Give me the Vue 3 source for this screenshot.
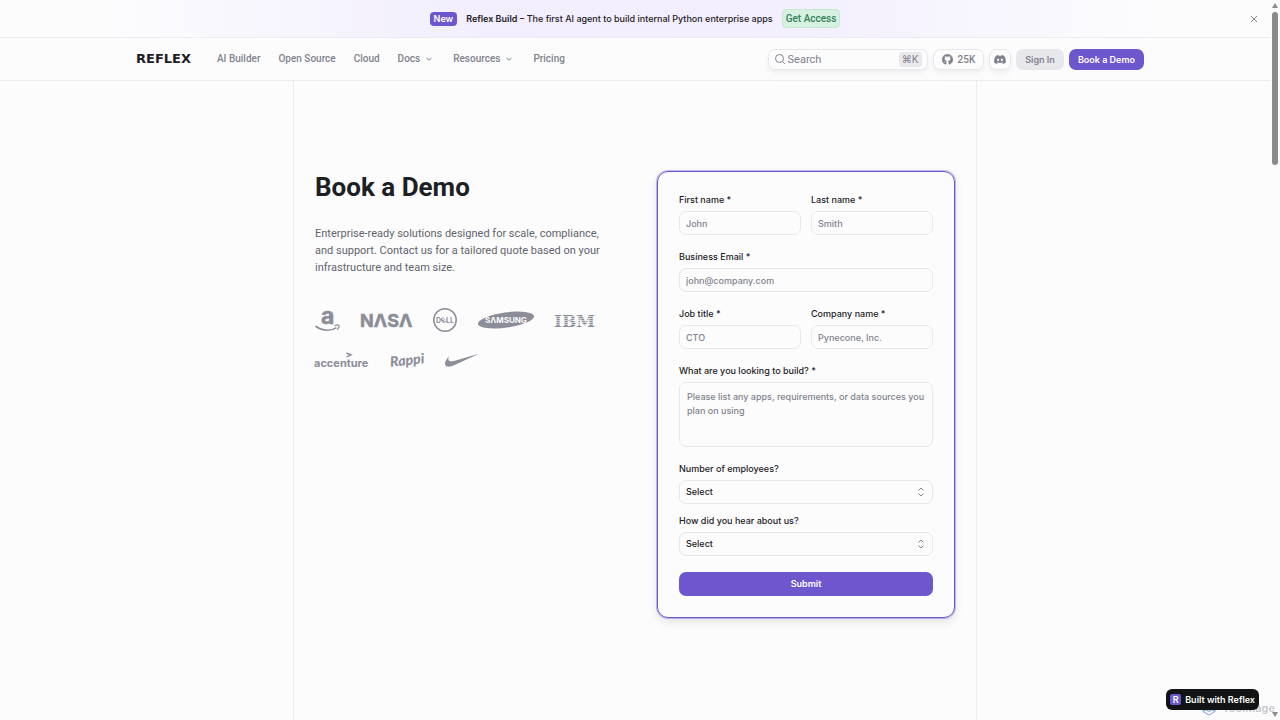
<script setup>
import { ref } from 'vue'

const showBanner = ref(true)
const navLinks = [
  { label: 'AI Builder' },
  { label: 'Open Source' },
  { label: 'Cloud' },
  { label: 'Docs', menu: true },
  { label: 'Resources', menu: true },
  { label: 'Pricing' },
]
const fields = [
  { id: 'first-name', label: 'First name *', hint: 'John' },
  { id: 'last-name', label: 'Last name *', hint: 'Smith' },
  { id: 'email', label: 'Business Email *', hint: 'john@company.com', type: 'email', wide: true },
  { id: 'job-title', label: 'Job title *', hint: 'CTO' },
  { id: 'company', label: 'Company name *', hint: 'Pynecone, Inc.' },
]
const selects = [
  { id: 'employees', label: 'Number of employees?' },
  { id: 'referral', label: 'How did you hear about us?' },
]
</script>

<template>
  <div class="page">
    <div v-if="showBanner" class="banner">
      <span class="tag">New</span>
      <p class="news"><strong>Reflex Build</strong> – The first AI agent to build internal Python enterprise apps</p>
      <a class="access" href="#">Get Access</a>
      <button class="close" type="button" aria-label="Close" @click="showBanner = false">
        <svg viewBox="0 0 8 8" width="8" height="8"><path d="M1 1l6 6M7 1l-6 6" /></svg>
      </button>
    </div>

    <header class="header">
      <div class="bar">
        <a class="brand" href="#">REFLEX</a>
        <nav class="nav">
          <a v-for="link in navLinks" :key="link.label" href="#">
            {{ link.label }}
            <svg v-if="link.menu" viewBox="0 0 8 8" width="8" height="8"><path d="M1.5 3l2.5 2.2L6.5 3" /></svg>
          </a>
        </nav>
        <div class="actions">
          <label class="search">
            <svg viewBox="0 0 12 12" width="12" height="12"><circle cx="5.5" cy="5.5" r="4" /><path d="M8.5 8.5l2.3 2.3" /></svg>
            <input type="search" placeholder="Search" aria-label="Search" />
            <kbd>⌘K</kbd>
          </label>
          <a class="pill stars" href="#">
            <svg viewBox="0 0 16 16" width="11" height="11"><path stroke="#80838d" d="M8 .6a7.4 7.4 0 0 0-3 14.2c.5.2.9 0 .9-.5v-2c-2.2.4-2.7-.7-3-1.4-.2-.5-.6-.8-1-1.1.8-.3 1.4.2 1.8.8.6.9 1.4 1 2.2.6.1-.5.3-.9.6-1.1-1.9-.2-3.2-1.1-3.2-3.4 0-.8.3-1.5.8-2-.2-.6-.2-1.3.1-2 .8 0 1.5.4 2.1.8a7 7 0 0 1 3.4 0c.6-.4 1.3-.8 2.1-.8.3.7.3 1.4.1 2 .5.5.8 1.2.8 2 0 2.3-1.3 3.2-3.2 3.4.4.4.6 1 .6 1.7v2.5c0 .5.4.7.9.5A7.4 7.4 0 0 0 8 .6z" /></svg>
            25K
          </a>
          <a class="pill discord" href="#" aria-label="Discord">
            <svg viewBox="0 0 16 12" width="12" height="9"><path fill-rule="evenodd" d="M13.5 1.1A13 13 0 0 0 10.3.1l-.5 1a12 12 0 0 0-3.6 0l-.5-1A13 13 0 0 0 2.5 1.1C.5 4.1-.1 7 .2 9.9c1.3 1 2.6 1.6 3.9 2l.8-1.3-1.2-.6.3-.3c2.5 1.2 5.4 1.2 8 0l.3.3-1.2.6.8 1.3c1.3-.4 2.6-1 3.9-2 .3-3.4-.6-6.2-2.3-8.8zM5.5 8.1c-.8 0-1.4-.7-1.4-1.6s.6-1.6 1.4-1.6 1.4.7 1.4 1.6-.6 1.6-1.4 1.6zm5 0c-.8 0-1.4-.7-1.4-1.6s.6-1.6 1.4-1.6 1.4.7 1.4 1.6-.6 1.6-1.4 1.6z" /></svg>
          </a>
          <a class="sign" href="#">Sign In</a>
          <a class="demo" href="#">Book a Demo</a>
        </div>
      </div>
    </header>

    <main class="frame">
      <section class="intro">
        <h1>Book a Demo</h1>
        <p>Enterprise-ready solutions designed for scale, compliance, and support. Contact us for a tailored quote based on your infrastructure and team size.</p>
        <ul class="logos">
          <li>
            <svg viewBox="0 0 25 24" width="25" height="24" role="img" aria-label="Amazon">
              <text x="6" y="16" class="bold thick" font-size="23">a</text>
              <path class="line" stroke-width="1.7" d="M.5 18.2C7 23.2 15.5 23.5 21.5 19.6" />
              <path class="line" stroke-width="1.2" d="M19.5 17.7c2-.8 3.8-.8 4.3-.3.4.6-.1 2.6-1.5 4.2" />
            </svg>
          </li>
          <li>
            <svg viewBox="0 0 51 24" width="51" height="24" role="img" aria-label="NASA">
              <text x="-1" y="19" class="bold thick" font-size="18">NΛSΛ</text>
            </svg>
          </li>
          <li>
            <svg viewBox="0 0 24 24" width="24" height="24" role="img" aria-label="Dell">
              <circle class="line" cx="12" cy="12" r="11.2" stroke-width="1.5" />
              <text x="3" y="15" class="bold" font-size="7">D</text>
              <text x="-2" y="3" transform="translate(10 12) rotate(-38)" class="bold" font-size="7">E</text>
              <text x="13" y="15" class="bold" font-size="7">LL</text>
            </svg>
          </li>
          <li>
            <svg viewBox="0 0 56 24" width="56" height="24" role="img" aria-label="Samsung">
              <ellipse cx="28" cy="12" rx="28.3" ry="7.6" transform="rotate(-8 28 12)" />
              <text x="7" y="15" class="bold light" font-size="8">SΛMSUNG</text>
            </svg>
          </li>
          <li>
            <svg viewBox="0 0 38 24" width="38" height="24" role="img" aria-label="IBM">
              <text x="-1" y="19" class="slab" font-size="17">IBM</text>
              <path class="stripes" d="M-1 8.5h41M-1 10.5h41M-1 12.5h41M-1 14.5h41M-1 16.5h41" />
            </svg>
          </li>
          <li>
            <svg viewBox="0 0 54 24" width="54" height="24" role="img" aria-label="Accenture">
              <path class="line" stroke-width="1.4" d="M31.5 5l4.5 1.800-4.500 2" />
              <text x="-1" y="19" class="bold" font-size="11">accenture</text>
            </svg>
          </li>
          <li>
            <svg viewBox="0 0 34 24" width="34" height="24" role="img" aria-label="Rappi">
              <text x="0" y="17" transform="rotate(-6 17 12)" class="script" font-size="14">Rappi</text>
            </svg>
          </li>
          <li>
            <svg viewBox="0 0 34 24" width="34" height="24" role="img" aria-label="Nike">
              <path d="M34 5.8L9.5 17.1c-2.7 1.2-5 1.7-6.7 1.5C.7 18.4-.3 16.9.1 14.7.5 12.7 2 10.6 4 8.2c-.8 1.7-1 3.3-.1 4.2 1.2 1.2 3.5.9 6 .3z" />
            </svg>
          </li>
        </ul>
      </section>

      <form class="card" @submit.prevent>
        <div v-for="f in fields" :key="f.id" class="field" :class="{ wide: f.wide }">
          <label :for="f.id">{{ f.label }}</label>
          <input :id="f.id" :type="f.type || 'text'" :placeholder="f.hint" />
        </div>
        <div class="field wide">
          <label for="build">What are you looking to build? *</label>
          <textarea id="build" placeholder="Please list any apps, requirements, or data sources you plan on using"></textarea>
        </div>
        <div class="choices wide">
          <div v-for="s in selects" :key="s.id" class="field">
            <label :for="s.id">{{ s.label }}</label>
            <div class="select">
              <select :id="s.id"><option>Select</option></select>
              <svg viewBox="0 0 8 10" width="8" height="10"><path d="M1.5 3.5L4 1l2.5 2.5M1.5 6.5L4 9l2.5-2.5" /></svg>
            </div>
          </div>
        </div>
        <button class="submit wide" type="submit">Submit</button>
      </form>
    </main>

    <div class="watermark" aria-hidden="true">
      <svg viewBox="0 0 16 16" width="16" height="16"><path d="M8 1l6 3.5v7L8 15l-6-3.5v-7zM8 4.5l3 1.8v3.4L8 11.5 5 9.7V6.3zM8 1v3.5M14 11.5l-3-1.8M2 11.5l3-1.8" /></svg>
      ToolMage
    </div>
    <a class="built" href="#"><span class="mark">R</span>Built with Reflex</a>
    <div class="scroll" aria-hidden="true">
      <svg viewBox="0 0 6 5" width="6" height="5"><path d="M3 0l3 5H0z" /></svg>
      <div class="track"><div class="thumb"></div></div>
      <svg viewBox="0 0 6 5" width="6" height="5"><path d="M0 0h6L3 5z" /></svg>
    </div>
  </div>
</template>

<style>
body {
  background: #fcfcfd;
}
</style>

<style scoped>
* {
  box-sizing: border-box;
}
.page {
  min-height: 100vh;
  display: flex;
  flex-direction: column;
  margin-right: 10px;
  color: #1c2024;
  font: 500 9px/14px Inter, sans-serif;
}
a {
  color: inherit;
  text-decoration: none;
}
button,
input,
select,
textarea {
  font: inherit;
  color: inherit;
  outline: none;
}
svg {
  display: block;
  flex: none;
  overflow: visible;
}
.banner {
  position: relative;
  display: flex;
  align-items: center;
  justify-content: center;
  gap: 9px;
  height: 38px;
  border-bottom: 1px solid #ececf1;
  background: linear-gradient(90deg, #fcfcfd 8%, #f2eefe 38%, #f3effe 62%, #fcfcfd 92%);
}
.tag {
  padding: 0 4px;
  border-radius: 4px;
  background: #6e56cf;
  color: #fff;
  font-weight: 600;
}
.news {
  margin: 0;
}
.news strong {
  font-weight: 600;
}
.access {
  padding: 1px 3px;
  border: 1px solid #c4e8d1;
  border-radius: 4px;
  background: #d6f1df;
  color: #30815a;
  font: 500 10px/15px Roboto, sans-serif;
}
.close {
  position: absolute;
  right: 10px;
  padding: 2px;
  border: 0;
  background: none;
}
.close svg,
.nav svg,
.search svg,
.select svg {
  fill: none;
  stroke: #80838d;
  stroke-width: 1;
}
.header {
  border-bottom: 1px solid #ececf1;
}
.bar {
  display: flex;
  align-items: center;
  max-width: 1018px;
  height: 42px;
  margin: 0 auto;
  padding-left: 10px;
}
.brand {
  margin-right: 26px;
  font: bold 13px/20px "DejaVu Sans", sans-serif;
}
.nav {
  display: flex;
  gap: 18px;
  color: #80838d;
  font: 500 10px/14px Roboto, sans-serif;
}
.nav a {
  display: flex;
  align-items: center;
  gap: 5px;
}
.nav svg {
  margin-right: 2px;
}
.actions {
  display: flex;
  gap: 5px;
  margin-left: auto;
  line-height: 21px;
}
.search,
.pill {
  display: flex;
  align-items: center;
  border: 1px solid #e8e8ec;
  border-radius: 7px;
  background: #fcfcfd;
  box-shadow: 0 2px 4px #0000000a, 0 6px 10px #00000006;
  color: #80838d;
}
.search {
  width: 160px;
  height: 21px;
  gap: 2px;
  padding: 0 5px;
  font: 400 11px/15px Roboto, sans-serif;
}
.search input {
  flex: 1;
  min-width: 0;
  padding: 0;
  border: 0;
  background: none;
}
::placeholder {
  color: #80838d;
  opacity: 1;
}
.search kbd {
  padding: 0 3px;
  border-radius: 4px;
  background: #e8e8ec;
  font: 400 10px/15px Inter, "DejaVu Sans", sans-serif;
}
.pill {
  padding: 0 8px;
  gap: 5px;
}
.pill svg {
  fill: #80838d;
}
.stars {
  font: 500 10px/15px Roboto, sans-serif;
}
.discord {
  padding: 0 4px;
}
.sign,
.demo {
  padding: 0 9px;
  border-radius: 7px;
  font-weight: 600;
}
.sign {
  background: #e8e8ec;
  color: #80838d;
}
.demo {
  background: #6e56cf;
  color: #fff;
}
.frame {
  flex: 1;
  display: grid;
  grid-template-columns: 1fr 1fr;
  align-items: start;
  gap: 44px;
  width: 100%;
  max-width: 684px;
  margin: 0 auto;
  padding: 90px 21px 100px;
  border: solid #ececf1;
  border-width: 0 1px;
}
h1 {
  margin: 0;
  font: 700 26px/32px Roboto, sans-serif;
}
.intro p {
  margin: 22px 0 32px;
  color: #60646c;
  font: 400 11px/17px Roboto, sans-serif;
}
.logos {
  display: flex;
  flex-wrap: wrap;
  gap: 16px 21px;
  margin: 0;
  padding: 0;
  list-style: none;
  fill: #8b8d98;
}
.line {
  fill: none;
  stroke: #8b8d98;
}
.bold {
  font-family: Inter, sans-serif;
  font-weight: 700;
}
.thick {
  stroke: #8b8d98;
  stroke-width: 0.5;
}
.light {
  fill: #fcfcfd;
}
.slab {
  font-family: "DejaVu Serif", serif;
  font-weight: 700;
}
.stripes {
  stroke: #fcfcfd;
  stroke-width: 0.6;
}
.script {
  font-family: Lato, sans-serif;
  font-style: italic;
  font-weight: 900;
}
.card {
  display: grid;
  grid-template-columns: 1fr 1fr;
  gap: 15px 10px;
  padding: 21px;
  border: 1px solid #6e56cf;
  border-radius: 11px;
  box-shadow: 0 0 0 1px #6e56cf66, 0 4px 10px #0000001a;
}
.wide {
  grid-column: 1 / -1;
}
.field {
  display: flex;
  flex-direction: column;
  gap: 4px;
  min-width: 0;
}
.field input,
.field textarea,
.field select {
  width: 100%;
  height: 24px;
  padding: 0 6px;
  border: 1px solid #e8e8ec;
  border-radius: 7px;
  background: #fcfcfd;
}
.field textarea {
  height: 65px;
  padding: 7px 0 6px 7px;
  resize: none;
}
.choices {
  display: grid;
  gap: 10px;
  margin-bottom: 1px;
}
.select {
  position: relative;
}
.field select {
  display: block;
  appearance: none;
}
.select svg {
  position: absolute;
  top: 7px;
  right: 8px;
}
.submit {
  height: 24px;
  border: 0;
  border-radius: 7px;
  background: #6e56cf;
  color: #fff;
  font-weight: 600;
}
.watermark {
  position: fixed;
  right: 5px;
  bottom: 4px;
  display: flex;
  align-items: center;
  gap: 5px;
  color: #c4c6cc;
  font: 600 11px/16px Inter, sans-serif;
}
.watermark svg {
  fill: none;
  stroke: #7d9fe0;
}
.built {
  position: fixed;
  right: 21px;
  bottom: 10px;
  display: flex;
  align-items: center;
  gap: 4px;
  padding: 5px 4px;
  border-radius: 6px;
  background: #111315;
  color: #fff;
  font-weight: 600;
  line-height: 11px;
}
.mark {
  width: 11px;
  border-radius: 2px;
  background: #6e56cf;
  text-align: center;
}
.scroll {
  position: fixed;
  top: 0;
  right: 0;
  bottom: 0;
  display: flex;
  flex-direction: column;
  align-items: center;
  gap: 4px;
  width: 10px;
  padding: 3px 0;
  fill: #8b8b8b;
}
.track {
  flex: 1;
}
.thumb {
  width: 6px;
  height: 22%;
  border-radius: 3px;
  background: #8b8b8b;
}
</style>
